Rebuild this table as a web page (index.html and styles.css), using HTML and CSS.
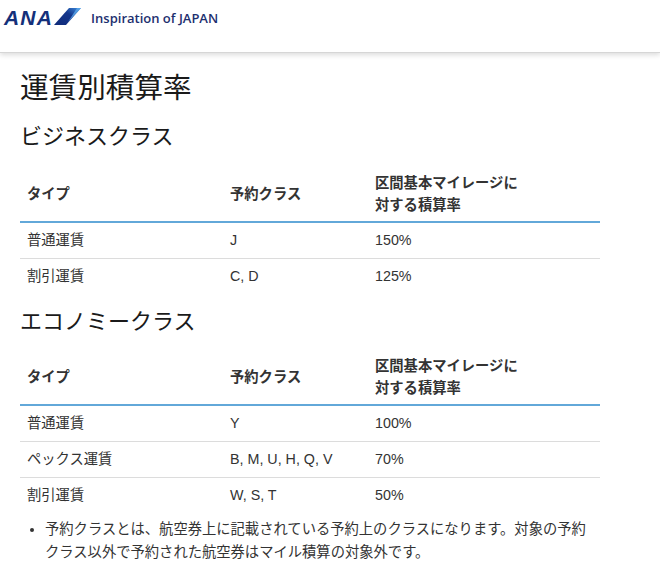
FILE: index.html
```html
<!DOCTYPE html>
<html lang="ja">
<head>
<meta charset="utf-8">
<title>運賃別積算率</title>
<link rel="stylesheet" href="styles.css">
</head>
<body>
<header class="site-header">
  <div class="logo">
    <span class="logo-text">ANA</span>
    <svg class="logo-wing" width="28" height="18" viewBox="0 0 28 18">
      <defs>
        <linearGradient id="wing" x1="0" y1="1" x2="1" y2="0">
          <stop offset="0" stop-color="#0f2a78"/>
          <stop offset="0.6" stop-color="#14368c"/>
          <stop offset="1" stop-color="#3f8fe0"/>
        </linearGradient>
      </defs>
      <polygon points="15,0 27,0 12,17 0,17" fill="url(#wing)"/>
      <polygon points="23,0 27,0 14,14" fill="#5aa8ea" opacity="0.8"/>
    </svg>
  </div>
  <span class="tagline">Inspiration of JAPAN</span>
</header>
<main class="content">
  <h1 class="page-title">運賃別積算率</h1>

  <h2 class="section-title">ビジネスクラス</h2>
  <table class="rate-table">
    <colgroup><col class="c1"><col class="c2"><col class="c3"></colgroup>
    <thead>
      <tr><th>タイプ</th><th>予約クラス</th><th>区間基本マイレージに<br>対する積算率</th></tr>
    </thead>
    <tbody>
      <tr><td>普通運賃</td><td>J</td><td>150%</td></tr>
      <tr><td>割引運賃</td><td>C, D</td><td>125%</td></tr>
    </tbody>
  </table>

  <h2 class="section-title second">エコノミークラス</h2>
  <table class="rate-table">
    <colgroup><col class="c1"><col class="c2"><col class="c3"></colgroup>
    <thead>
      <tr><th>タイプ</th><th>予約クラス</th><th>区間基本マイレージに<br>対する積算率</th></tr>
    </thead>
    <tbody>
      <tr><td>普通運賃</td><td>Y</td><td>100%</td></tr>
      <tr><td>ペックス運賃</td><td>B, M, U, H, Q, V</td><td>70%</td></tr>
      <tr><td>割引運賃</td><td>W, S, T</td><td>50%</td></tr>
    </tbody>
  </table>

  <ul class="notes">
    <li>予約クラスとは、航空券上に記載されている予約上のクラスになります。対象の予約クラス以外で予約された航空券はマイル積算の対象外です。</li>
  </ul>
</main>
</body>
</html>
```

FILE: styles.css
```css
html, body {
  margin: 0;
  padding: 0;
  background: #fff;
}
body {
  font-family: "Liberation Sans", "Noto Sans CJK JP", sans-serif;
  color: #222;
  width: 660px;
  height: 568px;
  overflow: hidden;
}
.site-header {
  height: 53px;
  box-sizing: border-box;
  display: flex;
  align-items: flex-start;
  padding: 8px 0 0 4px;
  border-bottom: 1px solid #d6d6d6;
  box-shadow: 0 2px 5px rgba(0, 0, 0, 0.14);
  position: relative;
  z-index: 1;
}
.logo {
  display: flex;
  align-items: center;
  height: 20px;
}
.logo-text {
  font-family: "Liberation Sans", sans-serif;
  font-weight: bold;
  font-style: italic;
  font-size: 21px;
  line-height: 20px;
  letter-spacing: 1.2px;
  color: #14307a;
}
.logo-wing {
  display: block;
  margin-left: 1px;
  margin-top: -2px;
}
.tagline {
  margin-left: 9px;
  font-family: "Open Sans", sans-serif;
  font-weight: 600;
  font-size: 13px;
  line-height: 20px;
  color: #1d2f6f;
}
.content {
  padding: 0 60px 0 20px;
  font-size: 14.3px;
}
.page-title {
  margin: 15px 0 14px;
  font-size: 28.6px;
  line-height: 40px;
  font-weight: normal;
  color: #1a1a1a;
}
.section-title {
  margin: 0 0 11px;
  font-size: 22px;
  line-height: 30px;
  font-weight: normal;
  color: #1a1a1a;
}
.section-title.second {
  margin-top: 13px;
  margin-bottom: 9px;
}
.rate-table {
  width: 580px;
  border-collapse: collapse;
  table-layout: fixed;
  color: #333;
}
.rate-table .c1 { width: 203px; }
.rate-table .c2 { width: 145px; }
.rate-table .c3 { width: 232px; }
.rate-table th {
  text-align: left;
  font-weight: bold;
  line-height: 22px;
  padding: 9px 7px 5px;
  vertical-align: middle;
  border-bottom: 2px solid #62a8d9;
  color: #333;
}
.rate-table td {
  height: 36px;
  box-sizing: border-box;
  padding: 0 7px;
  line-height: 20px;
  vertical-align: middle;
  border-bottom: 1px solid #dcdcdc;
}
.rate-table tbody tr:last-child td {
  border-bottom: none;
}
.notes {
  margin: 5px 0 0;
  padding-left: 25px;
  color: #333;
  line-height: 23px;
}
```
